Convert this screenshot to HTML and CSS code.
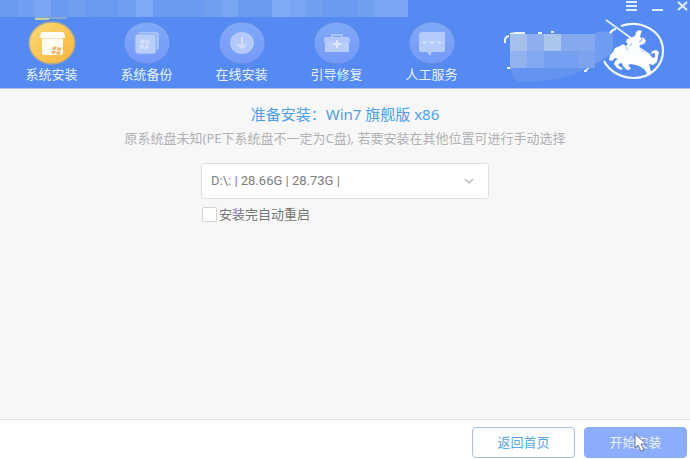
FILE: index.html
```html
<!DOCTYPE html>
<html lang="zh-CN">
<head>
<meta charset="utf-8">
<meta name="viewport" content="width=device-width, initial-scale=1">
<title>系统安装</title>
<link rel="stylesheet" href="styles.css">
</head>
<body>
<header class="header">
  <div class="titlebar">
    <svg class="mosaic" width="408" height="17" viewBox="0 0 408 17" shape-rendering="crispEdges" aria-hidden="true">
      <path fill="#6b9bf0" d="M0 0h408v17H0z"/>
      <path fill="#719ff0" d="M17 0h17v17H17zM68 0h17v17H68zM119 0h17v17h-17zM204 0h17v17h-17zM306 0h17v17h-17zM357 0h17v17h-17z"/>
      <path fill="#79a5f3" d="M34 0h17v17H34zM221 0h17v17h-17zM289 0h17v17h-17zM374 0h34v17h-34z"/>
      <path fill="#689bef" d="M51 0h17v17H51zM85 0h17v17H85zM255 0h17v17h-17z"/>
      <path fill="#7fa9f4" d="M136 0h17v17h-17zM272 0h17v17h-17z"/>
    </svg>
    <div class="controls">
      <button class="control" type="button" aria-label="菜单"><svg width="12" height="12" viewBox="0 0 12 12"><path d="M1 2h11M1 6h11M1 10h11"/></svg></button>
      <button class="control" type="button" aria-label="最小化"><svg width="12" height="12" viewBox="0 0 12 12"><path d="M1 10h11"/></svg></button>
      <button class="control" type="button" aria-label="关闭"><svg width="12" height="12" viewBox="0 0 12 12"><path d="M1 2l9 8M10 2l-9 8"/></svg></button>
    </div>
  </div>
  <div class="toolbar">
    <nav class="nav">
      <a class="tab active" href="#install">
        <svg class="tab-icon" width="50" height="48" viewBox="0 0 50 48" aria-hidden="true">
          <defs><linearGradient id="gold" x1="0" y1="0" x2="1" y2="1"><stop offset="0" stop-color="#f5dc78"/><stop offset=".45" stop-color="#fac85a"/><stop offset="1" stop-color="#f9b33c"/></linearGradient></defs>
          <path d="M8 1h32" stroke="#b9c6a6"/><path d="M8 2h14" stroke="#c9cf9c" stroke-width="2"/>
          <ellipse cx="25" cy="26" rx="23" ry="21" fill="url(#gold)" stroke="#a6a79a" stroke-width="1.300"/>
          <path d="M15 15h21q1 0 1 1l1 4q0 1-1 1h-1v15q0 2-2 2H17q-2 0-2-2V21h-1q-1 0-1-1l1-4q0-1 1-1z" fill="#fffdf4"/>
          <path d="M15 21.500h21" stroke="#f2e3bc"/>
          <path d="M26 30q2-1 4 0l-1 3q-2-1-4 0zM31 30q2 1 4 0l-1 3q-2 1-4 0zM25 34q2-1 4 0l-1 3q-2-1-4 0zM30 34q2 1 4 0l-1 3q-2 1-4 0z" fill="#f3b56c"/>
        </svg>
        <span>系统安装</span>
      </a>
      <a class="tab" href="#backup">
        <svg class="tab-icon" width="50" height="48" viewBox="0 0 50 48" aria-hidden="true">
          <defs><linearGradient id="blue" x1="0" y1="0" x2="0" y2="1"><stop offset="0" stop-color="#7fa9f7"/><stop offset="1" stop-color="#7599fa"/></linearGradient></defs>
          <ellipse class="disc" cx="25" cy="26" rx="23" ry="21"/>
          <rect x="16" y="15" width="21" height="18" rx="3" fill="#a8c3fa"/>
          <rect x="13" y="17" width="21" height="20" rx="3" fill="#bacefb" stroke="#86abf6"/>
          <path d="M19 23q2-1 4 0l-1 4q-2-1-4 0zM24 23q2 1 4 0l-1 4q-2 1-4 0zM18 28q2-1 4 0l-1 4q-2-1-4 0zM23 28q2 1 4 0l-1 4q-2 1-4 0z" fill="#d3e0fc"/>
        </svg>
        <span>系统备份</span>
      </a>
      <a class="tab" href="#online">
        <svg class="tab-icon" width="50" height="48" viewBox="0 0 50 48" aria-hidden="true">
          <ellipse class="disc" cx="25" cy="26" rx="23" ry="21"/>
          <ellipse cx="25" cy="26" rx="12" ry="11" fill="#b3c8fb"/>
          <path d="M25 20v10M21 27l4 4 4-4" fill="none" stroke="#d6dcfa" stroke-width="2"/>
        </svg>
        <span>在线安装</span>
      </a>
      <a class="tab" href="#repair">
        <svg class="tab-icon" width="50" height="48" viewBox="0 0 50 48" aria-hidden="true">
          <ellipse class="disc" cx="25" cy="26" rx="23" ry="21"/>
          <path d="M20 21v-3h10v3" fill="none" stroke="#abc4fb" stroke-width="2"/>
          <path d="M14 20h22q2 0 2 2v3H12v-3q0-2 2-2z" fill="#afc7fb"/>
          <path d="M13 25h24v9q0 1-1 1H14q-1 0-1-1z" fill="#b9cdfb"/>
          <path d="M25 23v8M21 27h8" stroke="#e1e9fd" stroke-width="2"/>
        </svg>
        <span>引导修复</span>
      </a>
      <a class="tab" href="#service">
        <svg class="tab-icon" width="50" height="48" viewBox="0 0 50 48" aria-hidden="true">
          <ellipse class="disc" cx="25" cy="26" rx="23" ry="21"/>
          <path d="M15 15h23v18q0 2-2 2H25l-2 4-3-4h-6q-2 0-2-2V18q0-3 3-3z" fill="#b5cbfb"/>
          <path d="M16 26q1-1 3 0M23 26q2-1 4 0M31 26q1-1 3 0" fill="none" stroke="#dbe5fd" stroke-width="2"/>
        </svg>
        <span>人工服务</span>
      </a>
    </nav>
    <svg class="brand" width="168" height="71" viewBox="500 17 168 71" role="img" aria-label="品牌标志">
      <path d="M505 43v-3q0-3 4-4M510 34l6-1h9M538 33h4M551 32h3M507 68h4l1-3M584 71h2l1-2M587 68h2" fill="none" stroke="#e9f1fc" stroke-width="2"/>
      <path d="M510 34h85q11-6 18 0v15q-2 5-9 10l-29 15q-27 9-56 8-9-4-9-18z" fill="#6494f1"/>
      <g shape-rendering="crispEdges">
        <path d="M510 34h17v17h-17z" fill="#a5c1ea"/><path d="M527 34h17v17h-17z" fill="#8caeef"/><path d="M544 34h17v17h-17z" fill="#aac6ed"/><path d="M561 34h34v17h-34z" fill="#85a9ee"/>
        <path d="M510 51h17v17h-17z" fill="#91b1ef"/><path d="M527 51h17v17h-17z" fill="#82a8f1"/><path d="M544 51h34v17h-34z" fill="#759ff0"/><path d="M578 51h17v17h-17z" fill="#7ca4ee"/>
      </g>
      <path d="M595 33q12-3 18 1v15q-2 5-9 10l-9 5z" fill="#6f9cf0"/>
      <path d="M621 26c20-7 42 5 42 25 0 15-13 27-29 27-13 0-25-7-30-17M610 33q3-4 6-4" fill="none" stroke="#f2f8ff" stroke-width="2.200"/>
      <path d="M606 20l25 18M638 47l12 8" stroke="#e2eefc" stroke-width="1.800"/>
      <path d="M635 36l1-4 3-2 3 1-1 2-1 4 4 1 2 3-2 3-4 1-1 3 3 3 4 2 4 2 3 3 2-1v-4l-4 1 1-3 4-1 3 2-1 4-1 6-4 3-4-1 1 4 1 4-2 3-2-1-2-4-4-3-5-2-5-1-3 1 3 4-4 1-4-4-1-3-4 1 2 3 3 1-2 2-4-2-3-4 1-3 3-2-3-1-3 3-3-1 1-5 3-3 2-4 5-2 3-2 3 2 2-2-2-2 1-3z" fill="#fbfdff"/>
      <path d="M641 37l1 3-3 2M632 43l-2 3M626 47l2 3" fill="none" stroke="#80a9f4"/>
    </svg>
  </div>
</header>
<main class="content">
  <h1 class="title">准备安装<span class="colon">：</span>Win7 旗舰版 x86</h1>
  <p class="hint">原系统盘未知(PE下系统盘不一定为C盘), 若要安装在其他位置可进行手动选择</p>
  <form class="options" id="install">
    <div class="picker">
      <select class="drive" aria-label="安装位置"><option>D:\: | 28.66G | 28.73G |</option></select>
      <svg class="chevron" width="12" height="8" viewBox="0 0 12 8" aria-hidden="true"><path d="M2 2l4 4 4-4"/></svg>
    </div>
    <label class="restart"><input class="check" type="checkbox"><span>安装完自动重启</span></label>
  </form>
</main>
<footer class="footer">
  <button class="button outline" type="button">返回首页</button>
  <button class="button primary" type="submit" form="install">开始安装
    <svg class="pointer" width="14" height="20" viewBox="0 0 14 20" aria-hidden="true"><path d="M1 1v14l3-3 3 6 3-1-3-6h5z"/></svg>
  </button>
</footer>
</body>
</html>
```
FILE: styles.css
```css
* { box-sizing: border-box; }
body {
  margin: 0;
  min-height: 100vh;
  display: flex;
  flex-direction: column;
  background: #f7f7f7;
  font-family: "Noto Sans", "Noto Sans CJK SC", sans-serif;
  font-size: 13px;
  line-height: 20px;
}
button, select, input { font: inherit; }
svg { display: block; }
.header {
  background: #548af2;
  border-bottom: 1px solid #a9c4f5;
}
.titlebar {
  display: flex;
  justify-content: space-between;
  height: 17px;
}
.controls { display: flex; gap: 14px; padding-right: 1px; }
.control {
  width: 12px;
  height: 12px;
  padding: 0;
  border: 0;
  background: none;
}
.control path { fill: none; stroke: #e2edfc; stroke-width: 2; }
.toolbar { display: flex; justify-content: space-between; height: 71px; }
.nav { display: flex; padding-left: 4px; }
.tab {
  display: flex;
  flex-direction: column;
  align-items: center;
  width: 95px;
  color: #e8f2ff;
  line-height: 18px;
  text-decoration: none;
}
.tab-icon { flex: none; }
.disc { fill: url(#blue); stroke: #5f8be5; }
.brand { flex: none; margin-right: 22px; }
.content {
  flex: 1;
  display: flex;
  flex-direction: column;
  align-items: center;
  padding: 13px 16px;
}
.title {
  margin: 0;
  color: #4da0e8;
  font-size: 15px;
  font-weight: 400;
  line-height: 24px;
}
.colon { font-family: "Noto Sans CJK TC", sans-serif; }
.hint { margin: 2px 0 15px; color: #b1b1b5; }
.options { width: 100%; max-width: 288px; }
.picker { display: grid; align-items: center; }
.drive {
  grid-area: 1 / 1;
  width: 100%;
  height: 36px;
  padding: 0 9px;
  appearance: none;
  border: 1px solid #dedede;
  border-radius: 3px;
  background: #fff;
  color: #7d7d7d;
  font-family: Roboto, "Noto Sans CJK SC", sans-serif;
}
.chevron {
  grid-area: 1 / 1;
  justify-self: end;
  margin-right: 14px;
  pointer-events: none;
}
.chevron path { fill: none; stroke: #b9b9b9; stroke-width: 1.5; }
.restart {
  display: flex;
  align-items: center;
  gap: 2px;
  width: fit-content;
  margin-top: 5px;
  padding-left: 1px;
  color: #777;
}
.check {
  width: 15px;
  height: 15px;
  margin: 0;
  appearance: none;
  border: 1px solid #d2d2d2;
  border-radius: 2px;
  background: #fff;
}
.check:checked { background: #548af2; }
.footer {
  display: flex;
  justify-content: flex-end;
  gap: 9px;
  padding: 7px 3px 1px;
  border-top: 1px solid #e2dfe2;
  background: #fff;
}
.button {
  position: relative;
  width: 103px;
  height: 31px;
  padding: 0 0 2px;
  border: 1px solid #a8c2e6;
  border-radius: 4px;
}
.outline { background: #fff; color: #57a5e5; }
.primary { border-color: #8cadfb; background: #8cadfb; color: #e8f1ff; }
.pointer { position: absolute; top: 5px; left: 49px; }
.pointer path { fill: #fff; stroke: #66779e; stroke-width: 1; }
```
